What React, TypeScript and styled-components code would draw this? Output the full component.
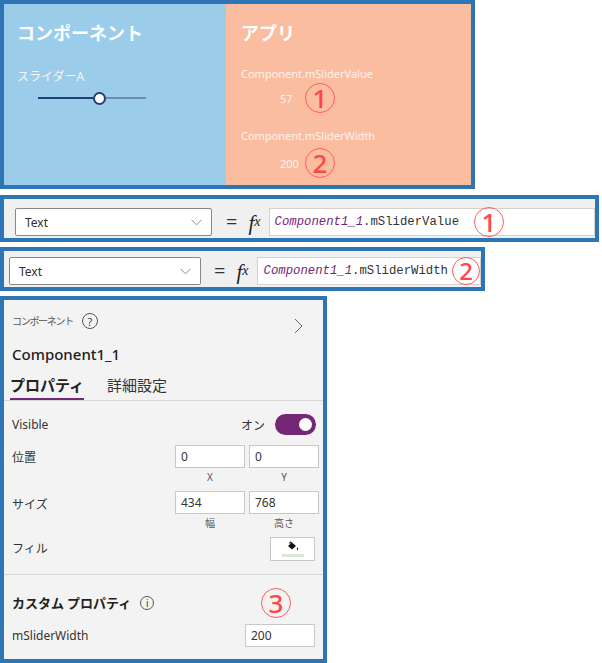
import React from 'react';
import styled, { createGlobalStyle } from 'styled-components';

const BLUE = '#2e75b6';
const PURPLE = '#742774';
const SANS = `"Noto Sans", "Noto Sans CJK JP", sans-serif`;

const GlobalStyle = createGlobalStyle`
  html, body { margin: 0; padding: 0; background: #fff; }
  body { font-family: ${SANS}; color: #333; }
`;

const Page = styled.div`
  display: flex;
  flex-direction: column;
  align-items: flex-start;
  width: 602px;
  height: 663px;
  overflow: hidden;
`;

const Shot = styled.section<{ $w: number; $h: number; $mt?: number }>`
  box-sizing: border-box;
  flex-shrink: 0;
  width: ${p => p.$w}px;
  height: ${p => p.$h}px;
  margin-top: ${p => p.$mt ?? 0}px;
  border: 4px solid ${BLUE};
`;

// red circled annotation numbers
const Mark = styled.span<{ $size: number; $ml?: number; $mr?: number }>`
  display: inline-flex;
  align-items: center;
  justify-content: center;
  box-sizing: border-box;
  flex-shrink: 0;
  width: ${p => p.$size}px;
  height: ${p => p.$size}px;
  margin-left: ${p => p.$ml ?? 0}px;
  margin-right: ${p => p.$mr ?? 0}px;
  border-radius: 50%;
  border: 1px solid #ff5c5c;
  color: #ff4545;
  font-family: ${SANS};
  font-size: ${p => Math.round(p.$size * 0.86)}px;
  font-weight: 500;
  line-height: 1;
`;

/* ---------- preview ---------- */

const Preview = styled(Shot)`
  display: flex;
`;

const Pane = styled.div<{ $bg: string; $w?: number; $pl: number }>`
  box-sizing: border-box;
  display: flex;
  flex-direction: column;
  align-items: flex-start;
  ${p => (p.$w ? `width: ${p.$w}px; flex-shrink: 0;` : 'flex: 1;')}
  background: ${p => p.$bg};
  padding: 15px 0 0 ${p => p.$pl}px;
  color: #fff;
`;

const PaneTitle = styled.div`
  font-family: "Noto Sans CJK JP", sans-serif;
  font-size: 18px;
  font-weight: 700;
  line-height: 26px;
`;

const PaneLabel = styled.div<{ $mt: number; $size: number }>`
  margin-top: ${p => p.$mt}px;
  font-size: ${p => p.$size}px;
  line-height: 16px;
  color: #fdf3ee;
`;

const Slider = styled.div`
  display: flex;
  align-items: center;
  width: 108px;
  height: 14px;
  margin: 6px 0 0 21px;
`;

const Track = styled.div<{ $color: string; $w?: number }>`
  height: 2px;
  ${p => (p.$w ? `width: ${p.$w}px;` : 'flex: 1;')}
  background: ${p => p.$color};
`;

const Thumb = styled.div`
  box-sizing: border-box;
  width: 13px;
  height: 13px;
  border-radius: 50%;
  background: #fff;
  border: 2px solid #1f3f78;
`;

const ValueRow = styled.div<{ $mt: number }>`
  display: flex;
  align-items: center;
  margin: ${p => p.$mt}px 0 0 39px;
`;

const ValueText = styled.span`
  width: 25px;
  font-size: 11px;
  color: #fdf3ee;
`;

/* ---------- formula bars ---------- */

const FormulaBar = styled(Shot)<{ $pt: number; $pl: number }>`
  display: flex;
  align-items: flex-start;
  background: #f0f0f0;
  padding: ${p => p.$pt}px 0 0 ${p => p.$pl}px;
`;

const Dropdown = styled.div<{ $w: number }>`
  box-sizing: border-box;
  display: flex;
  align-items: center;
  justify-content: space-between;
  width: ${p => p.$w}px;
  height: 28px;
  padding: 0 9px;
  background: #fff;
  border: 1px solid #8a8886;
  border-radius: 2px;
  font-size: 12px;
  color: #323130;
`;

const Equals = styled.span<{ $ml: number }>`
  margin-left: ${p => p.$ml}px;
  font-size: 20px;
  line-height: 28px;
  color: #333;
`;

const Fx = styled.span<{ $ml: number }>`
  margin-left: ${p => p.$ml}px;
  font-family: "Liberation Serif", serif;
  font-style: italic;
  font-size: 21px;
  line-height: 28px;
  color: #222;
  & > small {
    font-size: 14px;
    vertical-align: 4px;
  }
`;

const FormulaInput = styled.div<{ $ml: number; $pl: number }>`
  box-sizing: border-box;
  flex: 1;
  display: flex;
  align-items: center;
  height: 28px;
  margin-left: ${p => p.$ml}px;
  padding-left: ${p => p.$pl}px;
  background: #fff;
  border: 1px solid #d2d2d2;
  font-family: "Liberation Mono", monospace;
  font-size: 12.3px;
  color: #333;
  white-space: nowrap;
`;

const Ident = styled.span`
  color: ${PURPLE};
  font-style: italic;
`;

const ChevronDown = () => (
  <svg width="11" height="7" viewBox="0 0 11 7">
    <path d="M0.5 0.8 L5.5 5.8 L10.5 0.8" fill="none" stroke="#8a8a8a" strokeWidth="1" />
  </svg>
);

/* ---------- property panel ---------- */

const Panel = styled(Shot)`
  display: flex;
  flex-direction: column;
  background: #f3f3f3;
`;

const PanelHeader = styled.div`
  display: flex;
  justify-content: space-between;
  align-items: flex-start;
  padding: 13px 20px 0 8px;
`;

const Crumb = styled.div`
  display: flex;
  align-items: center;
  font-family: "Noto Sans CJK JP", sans-serif;
  font-size: 10px;
  letter-spacing: -1.3px;
  line-height: 16px;
  color: #555;
`;

const RoundIcon = styled.span<{ $size: number; $ml: number; $fs: number }>`
  box-sizing: border-box;
  display: inline-flex;
  align-items: center;
  justify-content: center;
  width: ${p => p.$size}px;
  height: ${p => p.$size}px;
  margin-left: ${p => p.$ml}px;
  border: 1px solid #555;
  border-radius: 50%;
  font-family: "Noto Sans", sans-serif;
  font-size: ${p => p.$fs}px;
  font-weight: 400;
  letter-spacing: 0;
  line-height: 1;
  color: #444;
`;

const ChevronRight = styled.svg`
  margin-top: 5px;
`;

const CompName = styled.div`
  margin: 10px 0 0 8px;
  font-size: 15px;
  font-weight: 500;
  line-height: 20px;
  color: #222;
`;

const TabBar = styled.div`
  display: flex;
  gap: 23px;
  margin-top: 11px;
  padding-left: 6px;
  border-bottom: 1px solid #d6d6d6;
`;

const Tab = styled.div<{ $active?: boolean }>`
  padding-bottom: 3px;
  border-bottom: 2px solid ${p => (p.$active ? PURPLE : 'transparent')};
  font-family: "Noto Sans CJK JP", sans-serif;
  font-size: 15px;
  font-weight: ${p => (p.$active ? 700 : 400)};
  line-height: 20px;
  color: ${p => (p.$active ? '#222' : '#333')};
`;

const Section = styled.div`
  display: flex;
  flex-direction: column;
  padding: 0 4px 0 8px;
`;

const Row = styled.div<{ $mt: number; $align?: string }>`
  display: flex;
  justify-content: space-between;
  align-items: ${p => p.$align ?? 'center'};
  margin-top: ${p => p.$mt}px;
`;

const Label = styled.span<{ $lh?: number }>`
  font-size: 12px;
  line-height: ${p => p.$lh ?? 16}px;
  color: #333;
`;

const SwitchGroup = styled.div`
  display: flex;
  align-items: center;
  gap: 10px;
  margin-right: 3px;
  font-size: 12px;
  color: #333;
`;

const Toggle = styled.div<{ $on: boolean }>`
  box-sizing: border-box;
  display: flex;
  align-items: center;
  justify-content: ${p => (p.$on ? 'flex-end' : 'flex-start')};
  width: 41px;
  height: 21px;
  padding: 0 4px;
  border-radius: 11px;
  background: ${p => (p.$on ? PURPLE : '#fff')};
  &::after {
    content: '';
    width: 13px;
    height: 13px;
    border-radius: 50%;
    background: #fff;
  }
`;

const FieldPair = styled.div`
  display: grid;
  grid-template-columns: 70px 70px;
  column-gap: 4px;
`;

const Field = styled.div`
  display: flex;
  flex-direction: column;
  align-items: center;
`;

const TextBox = styled.div<{ $mr?: number }>`
  box-sizing: border-box;
  display: flex;
  align-items: center;
  width: 70px;
  height: 23px;
  margin-right: ${p => p.$mr ?? 0}px;
  padding-left: 5px;
  background: #fff;
  border: 1px solid #c8c8c8;
  font-size: 12px;
  color: #333;
  align-self: stretch;
`;

const Caption = styled.span`
  margin-top: 2px;
  font-size: 10px;
  line-height: 14px;
  color: #555;
`;

const ColorButton = styled.div`
  box-sizing: border-box;
  display: flex;
  flex-direction: column;
  align-items: center;
  justify-content: center;
  gap: 2px;
  width: 45px;
  height: 24px;
  margin-right: 4px;
  background: #fff;
  border: 1px solid #c8c8c8;
`;

const Swatch = styled.div`
  width: 22px;
  height: 3px;
  background: #d9ead3;
`;

const Divider = styled.div<{ $mt: number }>`
  margin-top: ${p => p.$mt}px;
  height: 1px;
  background: #d6d6d6;
`;

const SectionTitle = styled.div`
  display: flex;
  align-items: center;
  font-family: "Noto Sans CJK JP", sans-serif;
  font-size: 13px;
  font-weight: 700;
  line-height: 18px;
  color: #222;
`;

const PaintBucket = () => (
  <svg width="14" height="11" viewBox="0 0 14 11">
    <path d="M2 5 L6 1.5 L10 5 L6 8.5 Z" fill="#111" />
    <path d="M4 3.3 L4 1 M4 1 L6 1.5" stroke="#111" strokeWidth="1" fill="none" />
    <path d="M11.5 6 Q13 8.2 11.5 9.2 Q10 8.2 11.5 6 Z" fill="#111" />
  </svg>
);

export default function App() {
  return (
    <Page>
      <GlobalStyle />

      <Preview $w={475} $h={189}>
        <Pane $bg="#9bcdeb" $w={222} $pl={13}>
          <PaneTitle>コンポーネント</PaneTitle>
          <PaneLabel $mt={24} $size={12}>スライダーA</PaneLabel>
          <Slider>
            <Track $color="#1f3f78" $w={55} />
            <Thumb />
            <Track $color="#6f8ea8" />
          </Slider>
        </Pane>
        <Pane $bg="#fbbda0" $pl={15}>
          <PaneTitle>アプリ</PaneTitle>
          <PaneLabel $mt={21} $size={11}>Component.mSliderValue</PaneLabel>
          <ValueRow $mt={1}>
            <ValueText>57</ValueText>
            <Mark $size={30}>1</Mark>
          </ValueRow>
          <PaneLabel $mt={15} $size={11}>Component.mSliderWidth</PaneLabel>
          <ValueRow $mt={4}>
            <ValueText>200</ValueText>
            <Mark $size={30}>2</Mark>
          </ValueRow>
        </Pane>
      </Preview>

      <FormulaBar $w={599} $h={47} $mt={6} $pt={9} $pl={11}>
        <Dropdown $w={197}>
          <span>Text</span>
          <ChevronDown />
        </Dropdown>
        <Equals $ml={14}>=</Equals>
        <Fx $ml={11}>f<small>x</small></Fx>
        <FormulaInput $ml={8} $pl={5}>
          <Ident>Component1_1</Ident>.mSliderValue
          <Mark $size={30} $ml={15}>1</Mark>
        </FormulaInput>
      </FormulaBar>

      <FormulaBar $w={485} $h={44} $mt={5} $pt={6} $pl={5}>
        <Dropdown $w={196}>
          <span>Text</span>
          <ChevronDown />
        </Dropdown>
        <Equals $ml={13}>=</Equals>
        <Fx $ml={11}>f<small>x</small></Fx>
        <FormulaInput $ml={8} $pl={6}>
          <Ident>Component1_1</Ident>.mSliderWidth
          <Mark $size={28} $ml={4}>2</Mark>
        </FormulaInput>
      </FormulaBar>

      <Panel $w={327} $h={367} $mt={5}>
        <PanelHeader>
          <Crumb>
            コンポーネント
            <RoundIcon $size={16} $ml={9} $fs={11}>?</RoundIcon>
          </Crumb>
          <ChevronRight width="9" height="16" viewBox="0 0 9 16">
            <path d="M1 1 L8 8 L1 15" fill="none" stroke="#666" strokeWidth="1" />
          </ChevronRight>
        </PanelHeader>
        <CompName>Component1_1</CompName>
        <TabBar>
          <Tab $active>プロパティ</Tab>
          <Tab>詳細設定</Tab>
        </TabBar>

        <Section>
          <Row $mt={13}>
            <Label>Visible</Label>
            <SwitchGroup>
              オン
              <Toggle $on />
            </SwitchGroup>
          </Row>
          <Row $mt={10} $align="flex-start">
            <Label $lh={25}>位置</Label>
            <FieldPair>
              <Field>
                <TextBox>0</TextBox>
                <Caption>X</Caption>
              </Field>
              <Field>
                <TextBox>0</TextBox>
                <Caption>Y</Caption>
              </Field>
            </FieldPair>
          </Row>
          <Row $mt={7} $align="flex-start">
            <Label $lh={27}>サイズ</Label>
            <FieldPair>
              <Field>
                <TextBox>434</TextBox>
                <Caption>幅</Caption>
              </Field>
              <Field>
                <TextBox>768</TextBox>
                <Caption>高さ</Caption>
              </Field>
            </FieldPair>
          </Row>
          <Row $mt={7}>
            <Label>フィル</Label>
            <ColorButton>
              <PaintBucket />
              <Swatch />
            </ColorButton>
          </Row>
        </Section>

        <Divider $mt={13} />

        <Section>
          <Row $mt={13}>
            <SectionTitle>
              カスタム プロパティ
              <RoundIcon $size={14} $ml={9} $fs={10}>i</RoundIcon>
            </SectionTitle>
            <Mark $size={30} $mr={28}>3</Mark>
          </Row>
          <Row $mt={6}>
            <Label>mSliderWidth</Label>
            <TextBox $mr={4}>200</TextBox>
          </Row>
        </Section>
      </Panel>
    </Page>
  );
}
